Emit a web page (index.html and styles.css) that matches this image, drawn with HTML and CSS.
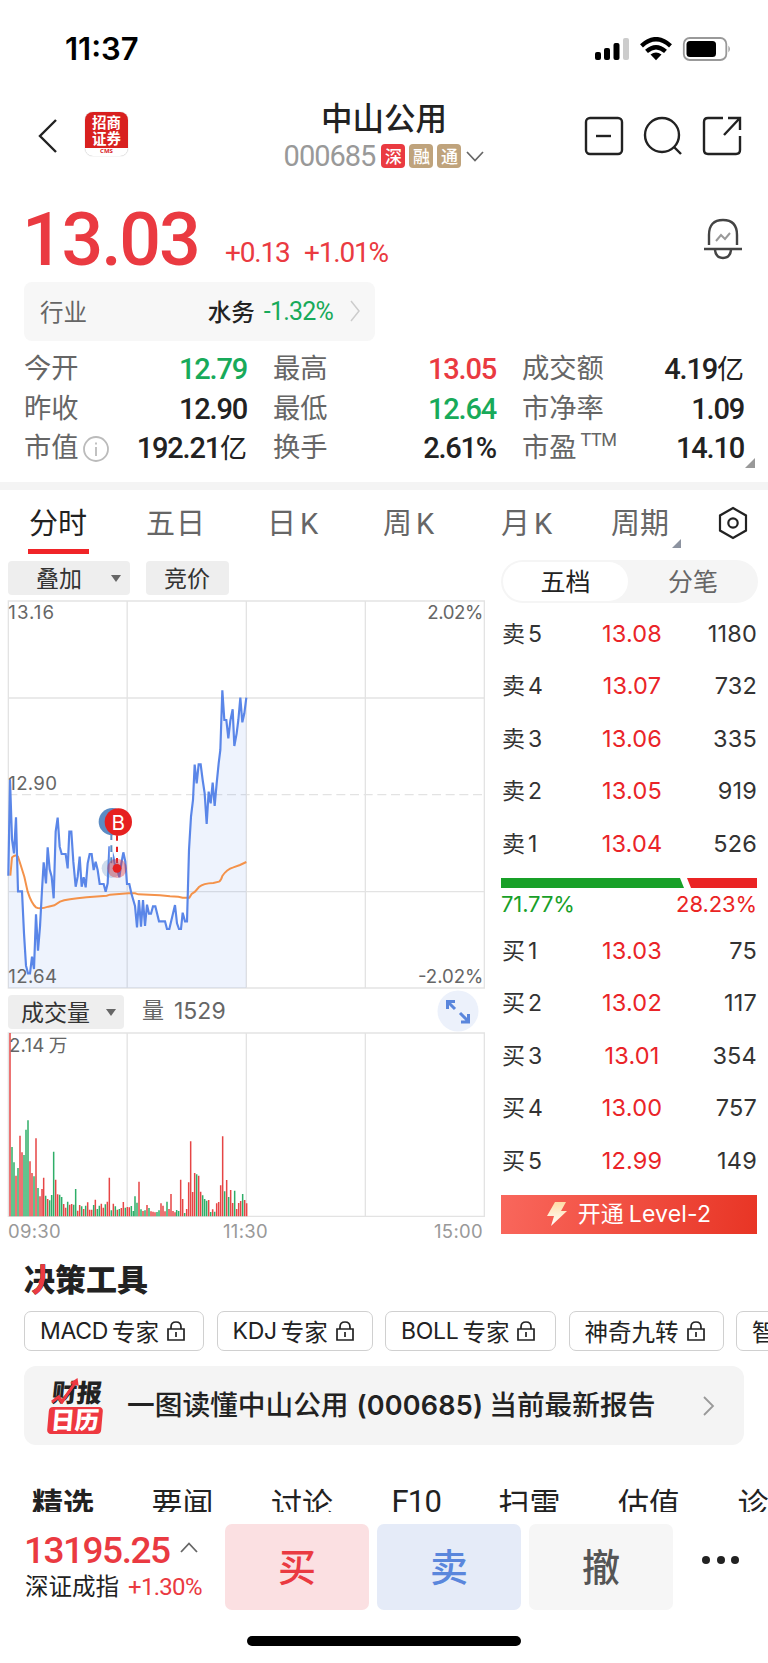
FILE: index.html
```html
<!DOCTYPE html>
<html lang="zh-CN">
<head>
<meta charset="utf-8">
<title>中山公用 000685</title>
<link rel="stylesheet" href="styles.css">
</head>
<body>
<main class="screen">
  <div class="status">
    <span class="status-time">11:37</span>
    <svg class="status-icons" width="138" height="24" viewBox="0 0 138 24">
      <rect x="0" y="15" width="6" height="8" rx="2"/><rect x="9" y="11" width="6" height="12" rx="2"/><rect x="18.500" y="6" width="6" height="17" rx="2"/><rect x="28" y="1" width="6" height="22" rx="2" fill="#ccc"/>
      <g fill="none" stroke="#000" stroke-width="4.300"><path d="M46.500 8.800Q61 -4.500 75.500 8.800"/><path d="M51.500 14.300Q61 6 70.500 14.300"/></g>
      <path d="M55.500 17.500Q61 13.500 66.500 17.500L61 23.300Z"/>
      <rect x="88.800" y="1" width="42.500" height="22" rx="6" fill="none" stroke="#999" stroke-width="1.800"/><rect x="91.500" y="4" width="29.500" height="16" rx="3.500"/><path d="M133.500 8.500Q136 12 133.500 15.500Z" fill="#888"/>
    </svg>
  </div>

  <header class="nav">
    <svg class="back" width="22" height="36" viewBox="0 0 22 36"><path d="M19 2L3 18L19 34"/></svg>
    <div class="cms"><div class="cms-top">招商<br>证券</div><div class="cms-bottom">CMS</div></div>
    <div class="stock">
      <h1>中山公用</h1>
      <div class="stock-sub"><span class="code">000685</span><i class="tag tag-red">深</i><i class="tag">融</i><i class="tag">通</i><svg width="18" height="11" viewBox="0 0 18 11"><path d="M1 1L9 9.500L17 1"/></svg></div>
    </div>
    <svg class="nav-icons" width="160" height="40" viewBox="0 0 160 40">
      <rect x="2" y="2" width="36" height="36" rx="4"/><path d="M12 20H27"/>
      <circle cx="78" cy="19" r="17"/><path d="M90 31L97 38"/>
      <path d="M139 2H124Q120 2 120 6V34Q120 38 124 38H152Q156 38 156 34V20M144 2H156V14M155 3L140 19"/>
    </svg>
  </header>

  <section class="quote">
    <span class="price">13.03</span><span class="delta">+0.13</span><span class="delta pct">+1.01%</span>
    <svg class="bell" width="40" height="42" viewBox="0 0 40 42"><path d="M6 27V17Q6 2 20 2Q34 2 34 17V27M1 31H39M12 32Q13 40 20 40Q27 40 28 32"/><path class="spark" d="M13 23L18 17L22 21L27 15"/></svg>
  </section>

  <div class="industry"><span class="ind-label">行业</span><span class="ind-name">水务</span><span class="ind-pct">-1.32%</span><svg width="11" height="22" viewBox="0 0 11 22"><path d="M1 1L9 11L1 21"/></svg></div>

  <section class="stats">
    <div class="stat"><span>今开</span><b class="green">12.79</b></div>
    <div class="stat"><span>最高</span><b class="red">13.05</b></div>
    <div class="stat"><span>成交额</span><b>4.19<em>亿</em></b></div>
    <div class="stat"><span>昨收</span><b>12.90</b></div>
    <div class="stat"><span>最低</span><b class="green">12.64</b></div>
    <div class="stat"><span>市净率</span><b>1.09</b></div>
    <div class="stat"><span>市值</span><svg class="info" width="28" height="28" viewBox="0 0 28 28"><circle cx="14" cy="14" r="12"/><path d="M14 12V21M14 7.500V9.500"/></svg><b>192.21<em>亿</em></b></div>
    <div class="stat"><span>换手</span><b>2.61%</b></div>
    <div class="stat"><span>市盈</span><sup>TTM</sup><b>14.10</b><i class="corner"></i></div>
  </section>

  <nav class="periods">
    <span class="on">分时</span><span class="sp">五日</span><span>日<i>K</i></span><span>周<i>K</i></span><span>月<i>K</i></span><span class="more">周期</span>
    <svg width="30" height="34" viewBox="0 0 30 34"><path d="M15 2L28 9.500V24.500L15 32L2 24.500V9.500Z"/><circle cx="15" cy="17" r="4.700"/></svg>
  </nav>

  <section class="market">
    <div class="charts">
      <div class="tools"><span class="btn btn-add">叠加<i class="tri"></i></span><span class="btn btn-auc">竞价</span></div>
      <svg class="chart" width="482" height="392" viewBox="18 27 1446 1176">
        <path class="grid" d="M25 33H1453V1194H25ZM381.500 33V1194M739 33V1194M1096 33V1194M25 324H1453M25 905H1453"/>
        <path class="grid dash" d="M25 614H1453"/>
        <path class="area" d="M25 857L30 568L36 748L42 790L48 682L54 904H66L72 1030L78 1127L84 1150H90L96 1100L102 1137L108 973L114 1082L120 1010L126 900L131 817L138 880L143 772L149 838L155 860L161 925L167 725L173 683L179 770L185 792H197L203 835L208 725H214L220 815L227 890L233 860L239 800L245 890L251 862L257 892L263 820L269 792H275L281 840L287 815L293 840L299 882H311L317 905L323 880L328 772H332L340 800L346 830L351 835L358 862L364 820L370 787L376 815L381 882H388L394 910L405 948L411 1012L417 930L423 1010L429 930L435 1008L441 944L447 971H453L459 949H466L477 994H495L501 1017H508L525 945L531 1000L537 1017H543L548 968L555 994H561L567 780L573 680L579 630L584 524L590 580L596 523H602L608 570L614 610L620 702L626 605L632 640L638 578L644 648L650 580L656 520L661 480L667 301L673 390H679L685 445L691 392L698 358L703 468L710 430L715 390L721 323L727 397L733 370L739 323V1194H25Z"/>
        <path class="avg" d="M31 857L36 802Q46 792 54 800L62 825L73 860L83 905Q95 942 108 952Q120 959 145 950L163 946L180 935Q200 927 260 922L320 917L330 914L385 910H405L415 913L480 916L510 919L535 920L548 923H568L575 912L585 905L597 891Q610 880 640 879L657 875Q663 872 667 858Q680 838 700 832L720 825L739 816"/>
        <path class="line" d="M25 857L30 568L36 748L42 790L48 682L54 904H66L72 1030L78 1127L84 1150H90L96 1100L102 1137L108 973L114 1082L120 1010L126 900L131 817L138 880L143 772L149 838L155 860L161 925L167 725L173 683L179 770L185 792H197L203 835L208 725H214L220 815L227 890L233 860L239 800L245 890L251 862L257 892L263 820L269 792H275L281 840L287 815L293 840L299 882H311L317 905L323 880L328 772H332L340 800L346 830L351 835L358 862L364 820L370 787L376 815L381 882H388L394 910L405 948L411 1012L417 930L423 1010L429 930L435 1008L441 944L447 971H453L459 949H466L477 994H495L501 1017H508L525 945L531 1000L537 1017H543L548 968L555 994H561L567 780L573 680L579 630L584 524L590 580L596 523H602L608 570L614 610L620 702L626 605L632 640L638 578L644 648L650 580L656 520L661 480L667 301L673 390H679L685 445L691 392L698 358L703 468L710 430L715 390L721 323L727 397L733 370L739 323"/>
        <path d="M334 730V820M351 730V820" stroke="#fff" stroke-width="9" fill="none"/>
        <path d="M334 730V820" stroke="#5b8cc4" stroke-width="6" stroke-dasharray="20 16" fill="none"/>
        <path d="M351 736V820" stroke="#e62020" stroke-width="6" stroke-dasharray="16 18" fill="none"/>
        <circle cx="334" cy="835" r="29" fill="#5b8cc4" opacity=".3"/><circle cx="351" cy="835" r="29" fill="#e62020" opacity=".35"/><circle cx="351" cy="835" r="13" fill="#e62020"/>
        <circle cx="337" cy="695" r="41" fill="#5b8cc4"/><circle cx="355" cy="696" r="41" fill="#e62020"/>
        <text x="355" y="720" class="b" text-anchor="middle">B</text>
        <g class="lbl"><text x="25" y="88" textLength="137">13.16</text><text x="25" y="599" textLength="146">12.90</text><text x="25" y="1178" textLength="146">12.64</text><text x="1282" y="88" textLength="168">2.02%</text><text x="1254" y="1178" textLength="196">-2.02%</text></g>
      </svg>
      <div class="vol-head"><span class="btn btn-vol">成交量<i class="tri"></i></span><span class="vol-label">量</span><span class="vol-num">1529</span>
        <svg class="expand" width="42" height="42" viewBox="0 0 42 42"><circle cx="21" cy="21" r="20.500"/><path d="M18 19L11 12M10.500 19V11.500H18M23 23L31 31M24 32H31.500V24"/></svg>
      </div>
      <svg class="chart" width="482" height="186" viewBox="18 157 1446 558">
        <path class="grid" d="M25 160H1453V710H25ZM381.500 160V710M739 160V710M1096 160V710"/>
        <path class="up" d="M30 710V160M48 710V588M60 710V468M66 710V518M90 710V545M96 710V580M108 710V476M120 710V650M126 710V628M131 710V594M143 710V658M167 710V600M173 710V644M191 710V673M197 710V684M209 710V675M215 710V673M233 710V693M239 710V676M251 710V688M263 710V668M269 710V690M275 710V690M286 710V660M304 710V672M310 710V684M322 710V666M328 710V594M340 710V672M352 710V690M364 710V685M370 710V667M382 710V682M388 710V683M417 710V606M429 710V694M441 710V676M453 710V695M459 710V696M465 710V698M483 710V671M489 710V678M495 710V695M507 710V688M513 710V643M519 710V694M525 710V698M542 710V600M548 710V658M560 710V688M566 710V608M572 710V485M578 710V637M584 710V580M596 710V588M602 710V636M626 710V661M638 710V689M650 710V671M656 710V667M662 710V617M668 710V470M680 710V601M692 710V631M698 710V670M710 710V688M716 710V670M722 710V664M734 710V661M740 710V671"/>
        <path class="down" d="M36 710V502M42 710V548M54 710V565M72 710V526M78 710V450M84 710V422M102 710V590M114 710V625M137 710V648M149 710V662M155 710V646M161 710V516M179 710V645M185 710V652M203 710V666M221 710V675M227 710V628M245 710V680M257 710V678M281 710V676M292 710V688M298 710V678M316 710V674M334 710V692M346 710V680M358 710V688M376 710V684M394 710V679M400 710V694M405 710V650M411 710V669M423 710V689M435 710V692M447 710V685M471 710V697M477 710V692M501 710V666M530 710V691M536 710V694M554 710V700M590 710V584M608 710V647M614 710V658M620 710V663M632 710V697M644 710V696M674 710V635M686 710V652M704 710V633M728 710V643"/>
        <g class="lbl"><text x="27" y="217" textLength="106">2.14</text><text x="146" y="217" class="cjk">万</text></g>
      </svg>
      <div class="times"><span>09:30</span><span>11:30</span><span>15:00</span></div>
    </div>

    <div class="book">
      <div class="seg"><span class="seg-on">五档</span><span>分笔</span></div>
      <div class="rows">
        <div class="row"><span>卖<i>5</i></span><b>13.08</b><em>1180</em></div>
        <div class="row"><span>卖<i>4</i></span><b>13.07</b><em>732</em></div>
        <div class="row"><span>卖<i>3</i></span><b>13.06</b><em>335</em></div>
        <div class="row"><span>卖<i>2</i></span><b>13.05</b><em>919</em></div>
        <div class="row"><span>卖<i>1</i></span><b>13.04</b><em>526</em></div>
      </div>
      <div class="ratio"><i class="ratio-sell"></i><i class="ratio-buy"></i></div>
      <div class="ratio-text"><span>71.77%</span><span class="r">28.23%</span></div>
      <div class="rows">
        <div class="row"><span>买<i>1</i></span><b>13.03</b><em>75</em></div>
        <div class="row"><span>买<i>2</i></span><b>13.02</b><em>117</em></div>
        <div class="row"><span>买<i>3</i></span><b>13.01</b><em>354</em></div>
        <div class="row"><span>买<i>4</i></span><b>13.00</b><em>757</em></div>
        <div class="row"><span>买<i>5</i></span><b>12.99</b><em>149</em></div>
      </div>
      <div class="level2"><svg width="20" height="24" viewBox="0 0 20 24"><defs><linearGradient id="bolt" x1="0" y1="0" x2="0" y2="1"><stop offset="0" stop-color="#ffdca6"/><stop offset="1" stop-color="#fff"/></linearGradient></defs><path d="M8 0H19L14 9H20L4 24L7 14H0Z" fill="url(#bolt)"/></svg><span>开通<i>Level-2</i></span></div>
    </div>
  </section>

  <h2 class="tools-title"><span class="jue">决</span>策工具</h2>
  <div class="chips">
    <span class="chip c1"><i>MACD</i>专家<svg class="lock" viewBox="0 0 18 20"><path d="M1 8H17V19H1ZM4 8V6Q4 1 9 1Q14 1 14 6V8M9 11V16"/></svg></span>
    <span class="chip c2"><i>KDJ</i>专家<svg class="lock" viewBox="0 0 18 20"><path d="M1 8H17V19H1ZM4 8V6Q4 1 9 1Q14 1 14 6V8M9 11V16"/></svg></span>
    <span class="chip c3"><i>BOLL</i>专家<svg class="lock" viewBox="0 0 18 20"><path d="M1 8H17V19H1ZM4 8V6Q4 1 9 1Q14 1 14 6V8M9 11V16"/></svg></span>
    <span class="chip c4">神奇九转<svg class="lock" viewBox="0 0 18 20"><path d="M1 8H17V19H1ZM4 8V6Q4 1 9 1Q14 1 14 6V8M9 11V16"/></svg></span>
    <span class="chip c5">智能</span>
  </div>

  <div class="report">
    <div class="cal"><div class="cal-top">财报<svg width="28" height="26" viewBox="0 0 28 26"><path d="M2 24L8 19L12 24L23 5" fill="none" stroke="#ee3840" stroke-width="3.200"/><path d="M18 5L25 0L27 8Z" fill="#ee3840"/></svg></div><div class="cal-bottom">日历</div></div>
    <span class="report-text">一图读懂中山公用<i>(000685)</i>当前最新报告</span>
    <svg class="go" width="12" height="20" viewBox="0 0 12 20"><path d="M1 1L10 10L1 19"/></svg>
  </div>

  <nav class="feeds"><span class="on">精选</span><span>要闻</span><span>讨论</span><span class="f10">F10</span><span>扫雷</span><span>估值</span><span>诊股</span></nav>

  <footer class="bar">
    <div class="index">
      <div class="index-val"><span>13195.25</span><svg width="20" height="11" viewBox="0 0 20 11"><path d="M2 10L10 1.500L18 10"/></svg></div>
      <div class="index-name">深证成指<b>+1.30%</b></div>
    </div>
    <button class="act buy">买</button><button class="act sell">卖</button><button class="act cancel">撤</button>
    <div class="dots"><i></i><i></i><i></i></div>
  </footer>
  <div class="home"></div>
</main>
</body>
</html>
```
FILE: styles.css
```css
* { box-sizing: border-box; margin: 0; padding: 0; }
i, em { font-style: normal; }
b, h1, h2 { font-weight: 400; }
body { width: 768px; height: 1663px; overflow: hidden; background: #fff; color: #222; font-family: Roboto, "Noto Sans CJK SC", sans-serif; text-autospace: no-autospace; }
.screen { width: 768px; height: 1663px; overflow: hidden; display: flex; flex-direction: column; background: #fff; }
svg { flex: none; fill: none; }

.status { height: 98px; padding: 32px 37px 0 65px; display: flex; justify-content: space-between; flex: none; }
.status-time { font: 600 31px/34px Inter, sans-serif; letter-spacing: 0; color: #000; }
.status-icons { margin-top: 5px; margin-right: -2px; fill: #000; }

.nav { height: 90px; flex: none; display: flex; padding-left: 37px; }
.back { margin-top: 20px; stroke: #222; stroke-width: 2.4; }
.cms { width: 43px; height: 44px; margin: 14px 0 0 26px; border-radius: 8px; overflow: hidden; background: #fff; box-shadow: 0 0 1px #999; }
.cms-top { height: 36px; background: #d8201f; color: #fff; text-align: center; font: 700 14.500px/15.500px "Noto Sans CJK SC", sans-serif; padding-top: 2px; }
.cms-bottom { height: 8px; text-align: center; color: #d8201f; font: 700 6px/7px "Open Sans", sans-serif; }
.stock { width: 240px; margin-left: 136px; display: flex; flex-direction: column; align-items: center; }
.stock h1 { font: 500 31.500px/40px "Noto Sans CJK SC", sans-serif; margin-top: -2px; }
.stock-sub { display: flex; align-items: center; height: 24px; margin-top: 8px; gap: 4px; }
.stock-sub svg { stroke: #666; stroke-width: 1.700; margin-left: 1px; }
.code { font-size: 29px; line-height: 24px; letter-spacing: -1px; color: #999; margin-right: 2px; }
.tag { width: 24px; height: 24px; border-radius: 4px; background: #bfa37c; color: #fff; text-align: center; font: 500 17px/23px "Noto Sans CJK SC", sans-serif; }
.tag-red { background: #ea3a41; }
.nav-icons { margin: 18px 0 0 80px; stroke: #222; stroke-width: 2.400; }

.quote { height: 94px; flex: none; display: flex; padding-left: 22px; color: #ea3a41; }
.price { width: 203px; font-size: 73.500px; line-height: 104px; font-weight: 500; letter-spacing: -2.200px; }
.delta { font-size: 28px; line-height: 36px; letter-spacing: -1.200px; width: 79px; margin-top: 47px; }
.pct { width: 101px; }
.bell { margin: 30px 0 0 298px; stroke: #444; stroke-width: 2.400; }
.bell .spark { stroke: #999; stroke-width: 2; }

.industry { width: 351px; height: 59px; flex: none; margin-left: 24px; border-radius: 8px; background: #f7f7f7; display: flex; align-items: center; padding: 0 14px 1px 16px; font-size: 23.500px; }
.ind-label { color: #666; flex: 1; }
.ind-name { font-weight: 500; margin-right: 9px; }
.ind-pct { color: #18aa5a; font-size: 25px; letter-spacing: -0.8px; margin-right: 17px; }
.industry svg { stroke: #ccc; stroke-width: 1.500; }

.stats { height: 142px; flex: none; padding: 9px 24px 0; display: grid; grid-template-columns: 223px 223px 222px; grid-auto-rows: 39.500px; column-gap: 26px; }
.stat { display: flex; align-items: center; position: relative; font-size: 27.300px; line-height: 39px; color: #666; white-space: nowrap; }
.stat b { margin-left: auto; color: #222; font-size: 29px; letter-spacing: -1.200px; font-weight: 500; }
.stat b em { font: 400 27px/30px "Noto Sans CJK SC", sans-serif; letter-spacing: 0; }
.stat b.green { color: #18aa5a; }
.stat b.red { color: #ea3a41; }
.info { stroke: #bbb; stroke-width: 1.800; margin-left: 3px; }
.stat sup { font-size: 18px; line-height: 20px; margin: -18px 0 0 4px; letter-spacing: -0.5px; }
.corner { position: absolute; right: -11px; bottom: 1px; border-left: 10px solid transparent; border-bottom: 10px solid #999; }

.periods { height: 76px; flex: none; border-top: 8px solid #f4f4f4; display: grid; grid-template-columns: 117px 121px 116px 118px 110px 108px 30px; padding-left: 29px; font-size: 29px; line-height: 68px; color: #666; margin-top: -1px; }
.periods span { position: relative; }
.periods .sp { letter-spacing: 1px; }
.periods i { margin-left: 4px; }
.periods .on { color: #222; }
.periods .on::after { content: ""; position: absolute; left: -1px; top: 59px; width: 61px; height: 5px; background: #f02428; }
.periods .more::after { content: ""; position: absolute; left: 61px; top: 49px; border-left: 9px solid transparent; border-bottom: 9px solid #8d93a0; }
.periods svg { margin-top: 16px; margin-left: -1px; stroke: #222; stroke-width: 2.200; }

.market { height: 696px; flex: none; display: flex; }
.charts { width: 501px; }
.tools { height: 41px; display: flex; gap: 16px; padding: 3px 0 0 8px; }
.btn { display: flex; align-items: center; height: 34px; border-radius: 4px; background: #eee; font: 400 23px/32px "Noto Sans CJK SC", sans-serif; padding-bottom: 2px; color: #333; }
.btn-add { width: 122px; padding-left: 28px; gap: 29px; }
.btn-auc { width: 83px; padding-left: 18px; }
.btn-vol { width: 116px; padding-left: 13px; gap: 16px; }
.tri { border: 5px solid transparent; border-top: 7px solid #666; border-bottom: 0; margin-top: 3px; }
.chart { display: block; margin-left: 6px; }
.grid { stroke: #e3e3e3; stroke-width: 4; }
.dash { stroke-dasharray: 27 14; }
.area { fill: #5a86e8; fill-opacity: 0.1; }
.line { stroke: #5a86e8; stroke-width: 6.500; }
.avg { stroke: #f4924a; stroke-width: 6; }
.lbl { fill: #666; font-family: Inter, sans-serif; font-size: 56px; }
.lbl .cjk { font-family: "Noto Sans CJK SC", sans-serif; }
.b { fill: #fff; font-family: Inter, sans-serif; font-size: 62px; }
.up { stroke: #e64545; stroke-width: 4.500; }
.down { stroke: #2fae68; stroke-width: 4.500; }
.vol-head { height: 41px; display: flex; align-items: center; padding-left: 8px; }
.vol-label { font-size: 22px; line-height: 30px; color: #666; margin: -2px 0 0 18px; }
.vol-num { font: 400 23px/34px Inter, sans-serif; color: #666; margin: -1px 0 0 10px; }
.expand { margin: -1px 22px 0 auto; stroke: #5a86dc; stroke-width: 3; }
.expand circle { fill: #ecf1fb; stroke: none; }
.times { display: grid; grid-template-columns: 1fr 1fr 1fr; width: 475px; margin: 0 0 0 8px; font: 400 18.500px/26px Inter, sans-serif; letter-spacing: 0.3px; color: #999; }
.times span:nth-child(2) { text-align: center; }
.times span:nth-child(3) { text-align: right; }

.book { width: 257px; padding-top: 2px; }
.seg { height: 43px; border-radius: 22px; background: #f5f5f5; padding: 2px; display: flex; font: 400 25px/37px "Noto Sans CJK SC", sans-serif; color: #666; text-align: center; }
.seg span { flex: 1; padding-left: 2px; }
.seg .seg-on { flex: none; width: 125px; padding: 0; background: #fff; border-radius: 20px; color: #222; }
.rows { padding-top: 5px; font: 400 23.500px/52.400px Inter, sans-serif; }
.row { display: grid; grid-template-columns: 80px 100px 1fr; height: 52.400px; padding: 0 1px; color: #333; }
.row span { font-family: Inter, "Noto Sans CJK SC", sans-serif; font-size: 23px; }
.row span i { margin-left: 3px; }
.row b { color: #ea2428; text-align: center; letter-spacing: 0.2px; }
.row em { text-align: right; letter-spacing: 0.2px; }
.ratio { height: 10px; display: flex; gap: 3px; margin-top: 8px; width: 256px; }
.ratio-sell { width: 183px; background: #18a028; clip-path: polygon(0 0, 179px 0, 100% 100%, 0 100%); }
.ratio-buy { flex: 1; background: #ea2424; clip-path: polygon(0 0, 100% 0, 100% 100%, 4px 100%); }
.ratio-text { height: 32px; display: flex; justify-content: space-between; width: 256px; font: 400 22px/33px Inter, sans-serif; letter-spacing: -0.1px; color: #18a028; }
.ratio-text .r { color: #ea2424; }
.level2 { height: 39px; margin-top: 8px; background: linear-gradient(100deg, #f9675c, #e83525); color: #fff; display: flex; align-items: center; justify-content: center; gap: 11px; font: 400 23px/39px Inter, "Noto Sans CJK SC", sans-serif; width: 256px; }
.level2 i { margin-left: 5px; letter-spacing: 0.2px; }

.tools-title { font: 900 31px/44px "Noto Sans CJK SC", sans-serif; margin: 2px 0 0 24px; flex: none; height: 55px; }
.jue { position: relative; display: inline-block; }
.jue::after { content: "决"; position: absolute; left: 0; top: 0; line-height: 44px; color: #ea3a41; clip-path: polygon(16.400px 0, 21.200px 0, 21.200px 22px, 19.500px 29px, 12px 45px, 6px 45px, 6px 34px, 13.500px 28px, 16.400px 22px); }
.chips { display: flex; gap: 12.500px; height: 40px; flex: none; padding-left: 24px; white-space: nowrap; }
.chip { height: 40px; flex: none; border: 1.500px solid #d0d0d0; border-radius: 7px; display: flex; align-items: center; padding: 0 0 1px 15px; font: 400 23.500px/36px "Noto Sans CJK SC", sans-serif; color: #222; }
.chip i { font-family: Inter, sans-serif; font-size: 23px; margin-right: 4px; letter-spacing: -0.3px; }
.c1 { width: 180px; } .c2 { width: 156px; } .c3 { width: 171px; } .c4 { width: 155px; } .c5 { width: 160px; }
.lock { width: 18px; height: 20px; margin-left: 8px; stroke: #222; stroke-width: 1.700; }

.report { width: 720px; height: 79px; margin: 15px 0 0 24px; flex: none; background: #f4f4f4; border-radius: 12px; display: flex; align-items: center; padding-left: 24px; }
.cal { width: 55px; height: 56px; }
.cal-top { position: relative; height: 29px; font: 900 25px/26px "Noto Sans CJK SC", sans-serif; padding-left: 4px; transform: skewX(-6deg); }
.cal-top svg { position: absolute; left: 3px; top: 0; }
.cal-bottom { height: 27px; width: 54px; border-radius: 4px; background: #ee3840; color: #fff; font: 900 24px/24px "Noto Sans CJK SC", sans-serif; text-align: center; transform: skewX(-5deg); }
.report-text { margin: -2px 0 0 24px; width: 560px; font: 500 27.700px/40px "Noto Sans CJK SC", sans-serif; white-space: nowrap; }
.report-text i { font: 600 27px/40px Inter, sans-serif; letter-spacing: 0.2px; margin: 0 6px 0 8px; }
.go { margin-left: 16px; stroke: #999; stroke-width: 1.800; }

.feeds { height: 38px; margin-top: 29px; flex: none; overflow: hidden; display: flex; gap: 58px; padding-left: 32px; font: 400 31px/56px "Noto Sans CJK SC", sans-serif; white-space: nowrap; }
.feeds span { flex: none; width: 61.500px; }
.feeds .on { font-weight: 700; }
.feeds .f10 { font-family: Roboto, sans-serif; letter-spacing: -0.8px; padding-left: 1px; width: 50px; }

.bar { height: 98px; flex: none; padding: 12px 0 0 25px; display: flex; gap: 8px; }
.index { width: 192px; color: #ea3a41; }
.index-val { font-size: 37px; line-height: 44px; font-weight: 500; padding-top: 5px; height: 46px; margin-left: -1px; white-space: nowrap; }
.index-val span { letter-spacing: -1.500px; }
.index-val svg { stroke: #666; stroke-width: 1.800; margin-left: 9px; vertical-align: 10px; }
.index-name { font-size: 23.500px; line-height: 34px; color: #222; white-space: nowrap; }
.index-name b { color: #ea3a41; margin-left: 9px; font-size: 24px; letter-spacing: -0.7px; }
.act { width: 144px; height: 86px; border: 0; border-radius: 7px; padding-bottom: 4px; font: 500 38px/80px "Noto Sans CJK SC", sans-serif; }
.buy { background: #fbe0e2; color: #ea3a41; }
.sell { background: #e5ebf8; color: #5a86dc; }
.cancel { background: #f6f6f6; color: #555; }
.dots { display: flex; gap: 6.500px; padding: 32px 0 0 21px; }
.dots i { width: 8px; height: 8px; border-radius: 50%; background: #222; }
.home { width: 274px; height: 10px; flex: none; border-radius: 5px; background: #000; margin: 26px 0 0 247px; }
```
